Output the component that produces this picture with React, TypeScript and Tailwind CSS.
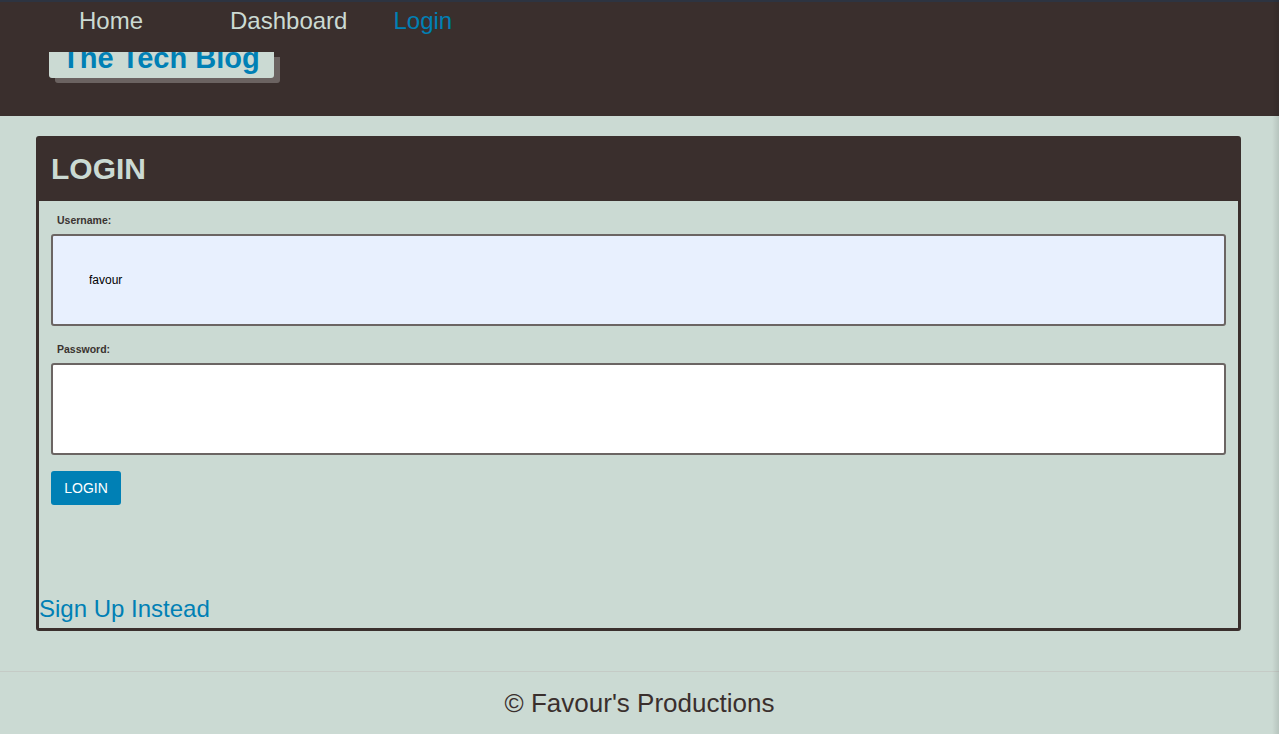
import { useState } from 'react';

const navLinks = [
  { id: 'home', label: 'Home', className: 'ml-[79px] text-[#cbdad3]' },
  { id: 'dashboard', label: 'Dashboard', className: 'ml-[87px] text-[#cbdad3]' },
  { id: 'login', label: 'Login', className: 'ml-[46px] text-[#0080b5]' },
];

export default function App() {
  const [username, setUsername] = useState('favour');
  const [password, setPassword] = useState('');

  return (
    <div className="relative min-h-screen bg-[#cbdad3] font-['Liberation_Sans',Arial,sans-serif] flex flex-col">
      {/* Header */}
      <header className="h-[116px] bg-[#3a2f2d] border-t-2 border-[#2d3441]">
        <nav className="flex pt-[5px] text-[24px] leading-[28px]">
          {navLinks.map((link) => (
            <a key={link.id} href="#" className={link.className}>
              {link.label}
            </a>
          ))}
        </nav>
        <div className="mt-[17px] ml-[49px] w-[225px] h-[26px] rounded-b-[3px] bg-[#cbdad3] shadow-[6px_5px_0_#6b6361] overflow-hidden">
          <h1 className="-mt-[8px] pl-[13px] text-[29px] leading-[29px] font-bold text-[#0080b5] whitespace-nowrap">
            The Tech Blog
          </h1>
        </div>
      </header>

      {/* Login card */}
      <main className="mt-[20px] ml-[36px] mr-[38px]">
        <section className="border-[3px] border-[#3a2f2d] rounded-[3px] flex flex-col">
          <div className="h-[62px] bg-[#3a2f2d] pl-[12px] pt-[15px]">
            <h2 className="text-[30px] leading-[30px] font-bold text-[#cbdad3]">LOGIN</h2>
          </div>
          <form className="px-[12px] pt-[12px] flex flex-col items-start" onSubmit={(e) => e.preventDefault()}>
            <label className="ml-[6px] mb-[7px] text-[10.5px] leading-[14px] font-bold text-[#3a3330]">Username:</label>
            <input
              value={username}
              onChange={(e) => setUsername(e.target.value)}
              className="w-full h-[92px] border-2 border-[#6b6563] rounded-[3px] bg-[#e8f0fe] pl-[36px] text-[12px] text-black outline-none"
            />
            <label className="ml-[6px] mt-[16px] mb-[7px] text-[10.5px] leading-[14px] font-bold text-[#3a3330]">Password:</label>
            <input
              type="password"
              value={password}
              onChange={(e) => setPassword(e.target.value)}
              className="w-full h-[92px] border-2 border-[#6b6563] rounded-[3px] bg-white pl-[36px] text-[12px] text-black outline-none"
            />
            <button
              type="submit"
              className="mt-[16px] h-[34px] w-[70px] rounded-[3px] bg-[#0080b5] text-white text-[14px] leading-none"
            >
              LOGIN
            </button>
          </form>
          <a href="#" className="mt-[90px] mb-[5px] text-[24px] leading-[28px] text-[#0080b5] self-start">
            Sign Up Instead
          </a>
        </section>
      </main>

      {/* Footer */}
      <footer className="mt-[40px] border-t border-[#c5cbc6] pt-[16px] pb-[16px] text-center">
        <p className="text-[26px] leading-[30px] text-[#3a2f2d]">© Favour's Productions</p>
      </footer>

      <div className="pointer-events-none absolute top-0 right-0 h-full w-[7px] bg-gradient-to-r from-transparent to-black/10" />
    </div>
  );
}
